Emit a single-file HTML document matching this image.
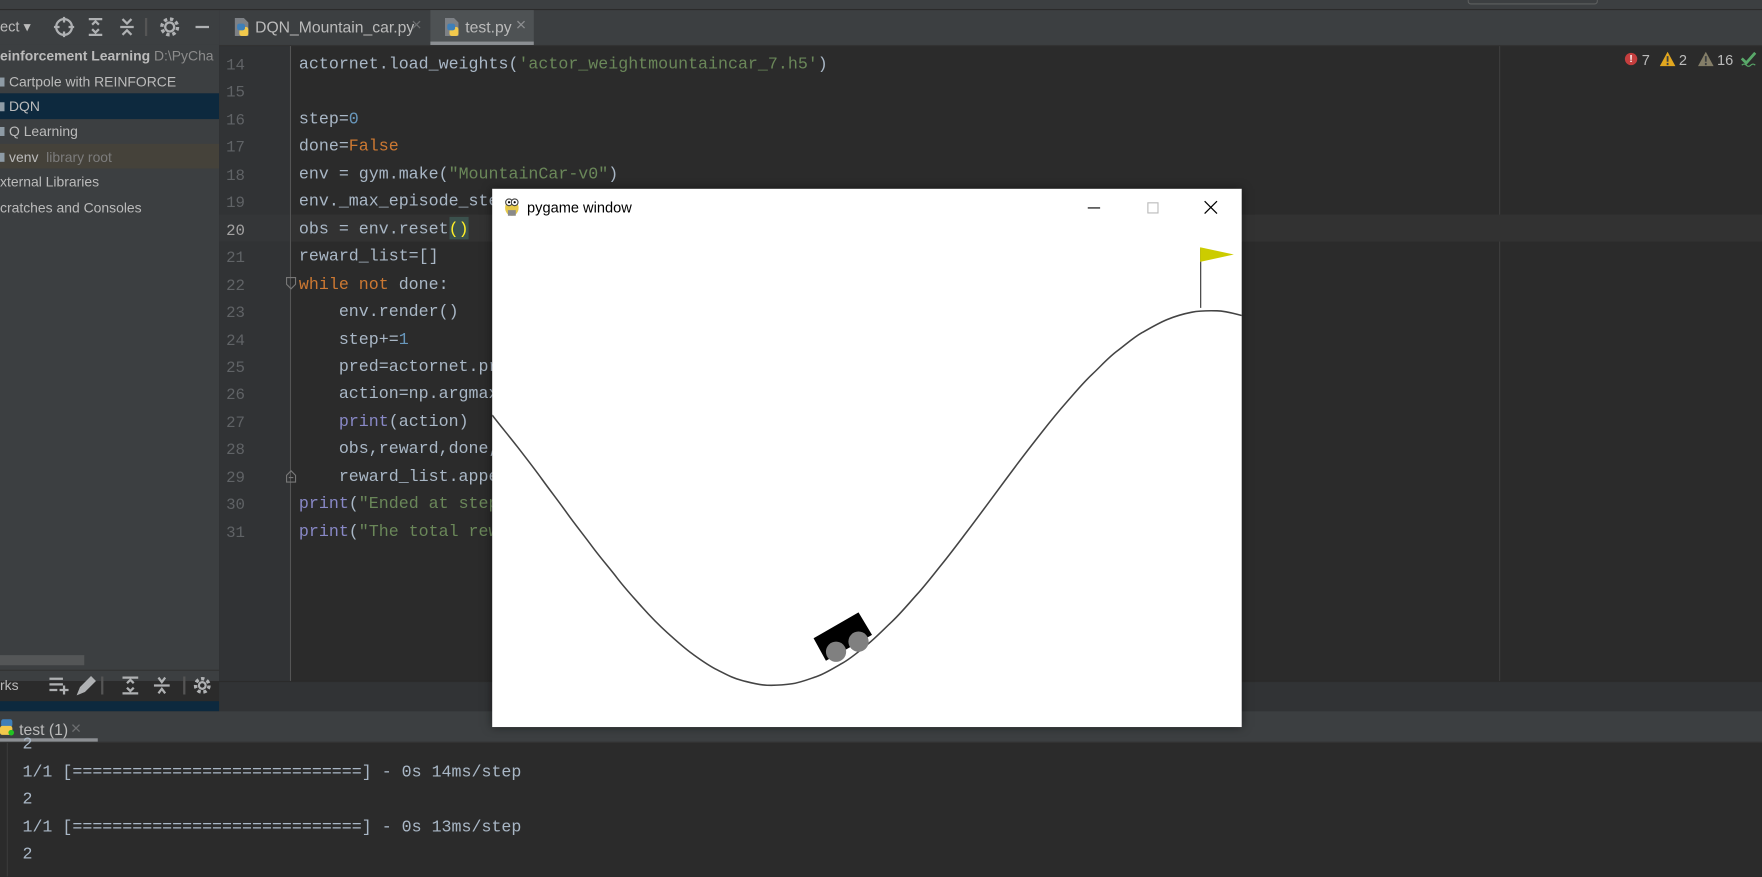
<!DOCTYPE html>
<html><head><meta charset="utf-8"><style>
html,body{margin:0;padding:0;width:1762px;height:876px;overflow:hidden;background:#2b2b2b}
#w{position:absolute;left:0;top:0;width:1568px;height:780px;transform:scale(1.12372);transform-origin:0 0;background:#2b2b2b;overflow:hidden;font-family:"Liberation Sans",sans-serif}
.a{position:absolute}
.ui{color:#bbbbbb;font-size:12.4px;white-space:nowrap}
.code{font-family:"Liberation Mono",monospace;font-size:14.8px;color:#a9b7c6;white-space:pre}
.ln{font-family:"Liberation Mono",monospace;font-size:14px;color:#606366;width:30px;text-align:right}
.k{color:#cc7832}.n{color:#6897bb}.s{color:#6a8759}.p{color:#8888c6}
.sq{display:inline-block;width:7px;height:8px;background:#8e9ba5;margin-right:4px;vertical-align:0}
</style></head><body><div id="w">
<div class="a" style="left:0;top:0;width:1568px;height:8px;background:#3c3f41;border-bottom:1px solid #2b2b2b"></div>
<div class="a" style="left:1306px;top:0;width:114px;height:3px;border:1px solid #5e6060;border-top:none;border-radius:0 0 3px 3px"></div>
<div class="a" style="left:0;top:9px;width:195px;height:31px;background:#3c3f41;border-bottom:1px solid #323232"></div>
<div class="a ui" style="left:0;top:16px;font-size:13px">ect &#9662;</div>
<svg class="a" style="left:46px;top:13px" width="146" height="22" viewBox="0 0 146 22" fill="none" stroke="#afb1b3" stroke-width="2">
<circle cx="11" cy="11" r="7"/><path d="M11 2v5M11 15v5M2 11h5M15 11h5"/>
<path d="M33 4h12M33 18h12M36 9l3-3 3 3M36 13l3 3 3-3"/>
<path d="M61 11h12M63 4l4 4 4-4M63 18l4-4 4 4"/>
<path d="M84 3v16" stroke="#555"/>
<circle cx="105" cy="11" r="4"/><circle cx="105" cy="11" r="7" stroke-dasharray="3 2.5" stroke-width="3"/>
<path d="M128 11h12"/>
</svg>
<div class="a" style="left:0;top:40px;width:195px;height:566px;background:#3c3f41"></div>
<div class="a ui" style="left:0;top:43px;font-weight:bold">einforcement Learning <span style="font-weight:normal;color:#8c8c8c">D:\PyCha</span></div>
<div class="a ui" style="left:0;top:66px"><span class="sq" style="margin-left:-3px"></span>Cartpole with REINFORCE</div>
<div class="a" style="left:0;top:83px;width:195px;height:23px;background:#0d293e"></div>
<div class="a ui" style="left:0;top:88px"><span class="sq" style="margin-left:-3px"></span>DQN</div>
<div class="a ui" style="left:0;top:110px"><span class="sq" style="margin-left:-3px"></span>Q Learning</div>
<div class="a" style="left:0;top:128px;width:195px;height:22px;background:#45423a"></div>
<div class="a ui" style="left:0;top:133px"><span class="sq" style="margin-left:-3px"></span>venv <span style="color:#7c7c7c">&nbsp;library root</span></div>
<div class="a ui" style="left:0;top:155px">xternal Libraries</div>
<div class="a ui" style="left:0;top:178px">cratches and Consoles</div>
<div class="a" style="left:0;top:583px;width:75px;height:9px;background:#545657"></div>
<div class="a" style="left:0;top:596px;width:195px;height:1px;background:#323232"></div>
<div class="a ui" style="left:0;top:603px">rks</div>
<svg class="a" style="left:42px;top:600px" width="150" height="20" viewBox="0 0 150 20" fill="none" stroke="#afb1b3" stroke-width="2">
<path d="M2 4h12M2 9h12M2 14h7M11 14h8M15 10v8"/>
<path d="M28 17l2-5 9-9 3 3-9 9z" fill="#afb1b3"/>
<path d="M49 2v16" stroke="#555"/>
<path d="M67 3h14M67 17h14M71 8l3-3 3 3M71 12l3 3 3-3"/>
<path d="M95 10h14M99 3l3 4 3-4M99 17l3-4 3 4"/>
<path d="M122 2v16" stroke="#555"/>
<circle cx="138" cy="10" r="3"/><circle cx="138" cy="10" r="6" stroke-dasharray="3 2.4" stroke-width="3"/>
</svg>
<div class="a" style="left:0;top:624px;width:195px;height:9px;background:#0d293e"></div>
<div class="a" style="left:195px;top:9px;width:1373px;height:31px;background:#3c3f41;border-bottom:1px solid #323232"></div>
<div class="a" style="left:383px;top:9px;width:92px;height:31px;background:#4e5254"></div>
<div class="a" style="left:383px;top:37px;width:92px;height:3px;background:#8c8f93"></div>
<svg class="a" style="left:207px;top:15px" width="16" height="18" viewBox="0 0 16 18"><path d="M2 1h8l4 4v12H2z" fill="#7d8186"/><rect x="6" y="9" width="8" height="8" rx="2" fill="#f2c94c"/><rect x="4" y="6" width="7" height="6" rx="2" fill="#3f7fb8"/></svg>
<div class="a ui" style="left:227px;top:16px;font-size:14px">DQN_Mountain_car.py</div>
<div class="a" style="left:366px;top:14px;color:#6c6e70;font-size:16px">×</div>
<svg class="a" style="left:394px;top:15px" width="16" height="18" viewBox="0 0 16 18"><path d="M2 1h8l4 4v12H2z" fill="#7d8186"/><rect x="6" y="9" width="8" height="8" rx="2" fill="#f2c94c"/><rect x="4" y="6" width="7" height="6" rx="2" fill="#3f7fb8"/></svg>
<div class="a ui" style="left:414px;top:16px;font-size:14px">test.py</div>
<div class="a" style="left:459px;top:14px;color:#8c8e90;font-size:16px">×</div>
<div class="a" style="left:195px;top:41px;width:63px;height:565px;background:#313335"></div>
<div class="a" style="left:258px;top:41px;width:1px;height:565px;background:#555"></div>
<div class="a" style="left:1334px;top:41px;width:1px;height:565px;background:#3d3d3d"></div>
<div class="a" style="left:259px;top:191px;width:1309px;height:24px;background:#323232"></div>
<div class="a" style="left:195px;top:191px;width:63px;height:24px;background:#343638"></div>
<div class="a" style="left:400px;top:193px;width:17px;height:20px;background:#3b514d"></div>
<div class="a" style="left:195px;top:606px;width:1373px;height:27px;background:#313335;border-top:1px solid #2b2b2b"></div>
<div class="a ln" style="left:188px;top:47px;line-height:24.45px">14<br>15<br>16<br>17<br>18<br>19<br><span style="color:#a4a3a3">20</span><br>21<br>22<br>23<br>24<br>25<br>26<br>27<br>28<br>29<br>30<br>31</div>
<svg class="a" style="left:254px;top:245px" width="10" height="186"><path d="M1 2h8v6l-4 4-4-4z" fill="none" stroke="#777"/><path d="M1 184h8v-6l-4-4-4 4z" fill="none" stroke="#777"/><path d="M3 180h4" stroke="#777"/></svg>
<div class="a code" style="left:266px;top:46px;line-height:24.45px">actornet.load_weights(<span class="s">'actor_weightmountaincar_7.h5'</span>)

step=<span class="n">0</span>
done=<span class="k">False</span>
env = gym.make(<span class="s">"MountainCar-v0"</span>)
env._max_episode_steps
obs = env.reset<span style="color:#ffef28">()</span>
reward_list=[]
<span class="k">while not</span> done:
    env.render()
    step+=<span class="n">1</span>
    pred=actornet.predict
    action=np.argmax
    <span class="p">print</span>(action)
    obs,reward,done,
    reward_list.append
<span class="p">print</span>(<span class="s">"Ended at step</span>
<span class="p">print</span>(<span class="s">"The total rew</span></div>
<div class="a" style="left:1446px;top:47px;width:11px;height:11px;border-radius:50%;background:#c43e3e;color:#fff;font-size:9px;text-align:center;line-height:11px;font-weight:bold">!</div>
<div class="a ui" style="left:1461px;top:46px;font-size:13px">7</div>
<svg class="a" style="left:1477px;top:46px" width="14" height="13"><path d="M7 0l7 13H0z" fill="#e2a71f"/><path d="M7 4v5M7 10v2" stroke="#3c3f41" stroke-width="1.6"/></svg>
<div class="a ui" style="left:1494px;top:46px;font-size:13px">2</div>
<svg class="a" style="left:1511px;top:46px" width="14" height="13"><path d="M7 0l7 13H0z" fill="#847e68"/><path d="M7 4v5M7 10v2" stroke="#3c3f41" stroke-width="1.6"/></svg>
<div class="a ui" style="left:1528px;top:46px;font-size:13px">16</div>
<svg class="a" style="left:1549px;top:46px" width="14" height="14"><path d="M1 6l4 4 8-9" fill="none" stroke="#59a869" stroke-width="2.5"/><path d="M1 12q2-2 4 0t4 0 4 0" fill="none" stroke="#59a869"/></svg>
<div class="a" style="left:0;top:633px;width:1568px;height:27px;background:#3c3f41;border-bottom:1px solid #323232"></div>
<svg class="a" style="left:0;top:640px" width="13" height="15"><rect x="1" y="0" width="10" height="7" rx="2" fill="#3f7fb8"/><rect x="0" y="6" width="11" height="8" rx="2" fill="#f2c94c"/><circle cx="10" cy="12" r="2.5" fill="#22c322"/></svg>
<div class="a ui" style="left:17px;top:641px;font-size:14px">test (1)</div>
<div class="a" style="left:63px;top:640px;color:#6c6e70;font-size:16px">×</div>
<div class="a" style="left:0;top:657px;width:87px;height:3px;background:#8c8f93"></div>
<div class="a" style="left:6px;top:661px;width:1px;height:119px;background:#3a3a3a"></div>
<div class="a code" style="left:20px;top:651px;line-height:24.5px">2
1/1 [=============================] - 0s 14ms/step
2
1/1 [=============================] - 0s 13ms/step
2</div>
<div class="a" style="left:438px;top:168px;width:667px;height:479px;background:#fff;box-shadow:0 0 8px rgba(0,0,0,.5)"></div>
<svg class="a" style="left:447px;top:175px" width="17" height="19" viewBox="0 0 17 19"><ellipse cx="8.5" cy="10" rx="6" ry="7" fill="#e6c94a"/><circle cx="6" cy="5" r="3" fill="#fff" stroke="#444"/><circle cx="11" cy="5" r="3" fill="#fff" stroke="#444"/><circle cx="6" cy="5" r="1" fill="#000"/><circle cx="11" cy="5" r="1" fill="#000"/><rect x="5" y="12" width="7" height="5" fill="#8a8a8a"/></svg>
<div class="a" style="left:469px;top:177px;font-size:13px;color:#000">pygame window</div>
<svg class="a" style="left:438px;top:168px" width="667" height="479" viewBox="438 168 667 479">
<path d="M968 185h11" stroke="#000" stroke-width="1"/>
<rect x="1021.5" y="180.5" width="9" height="9" fill="none" stroke="#bbb"/>
<path d="M1072 179l11 11M1083 179l-11 11" stroke="#000" stroke-width="1.1"/>
<path fill="none" stroke="#444" stroke-width="1.4" d="M438,369.4 C445,378.6 453,388 460.2,397.3 S475.5,417 482.5,426.7 S497.5,446.7 504.7,456.8 S519.7,476.5 526.9,486.3 S542,505 549.2,514.4 S564,532 571.4,540.3 S586,556 593.7,562.9 S608,576 615.9,581.7 S630,592 638.2,596.1 S652,603.5 660.4,605.6 S675,609.6 682.6,609.8 S697,609.7 704.9,608.5 S720,604.3 727.1,601.9 S742,594.4 749.4,590.3 S764,580 771.6,573.8 S786,560.5 793.8,553.1 S808.5,537.3 816.1,528.9 S831,510.9 838.3,501.9 S853.3,482.6 860.6,473 S875.5,453.1 882.8,443.2 S897.6,423.2 905,413.3 S920,393.7 927.3,384.4 S942,366 949.5,357.5 S964,340.5 971.8,333.2 S986,318.5 994,312.5 S1008.5,300.5 1016.2,296.1 S1031,287.5 1038.5,284.4 S1053,279.3 1060.7,277.8 S1075,276.4 1083,276.6 S1098,279 1105.2,280.8"/>
<path d="M1068.5 221v53" stroke="#333" stroke-width="1"/>
<path d="M1068 220l30 6.5-30 6.5z" fill="#cccc00"/>
<path d="M724 568l40-23 12 20-41 23z" fill="#000"/>
<circle cx="744" cy="580" r="9" fill="#808080"/>
<circle cx="764" cy="571" r="9" fill="#808080"/>
</svg>
</div></body></html>
